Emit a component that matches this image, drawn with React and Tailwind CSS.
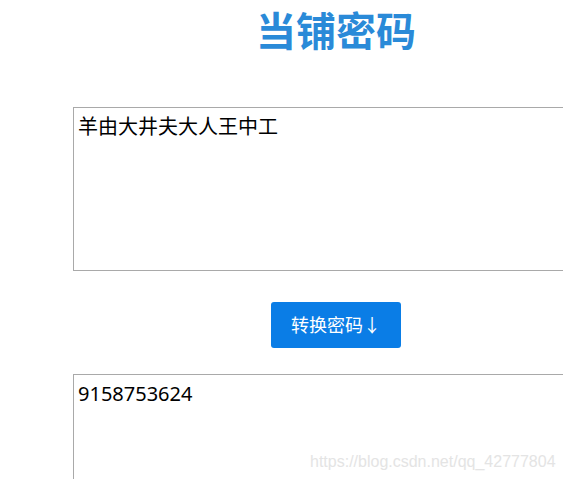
export default function App() {
  return (
    <div className="relative w-[563px] h-[479px] overflow-hidden bg-white" style={{ fontFamily: '"Noto Sans", "Noto Sans CJK SC", sans-serif' }}>
      <div className="ml-[73px] w-[526px] flex flex-col items-center">
        <h1 className="mt-[3px] h-[56px] text-[40px] leading-[56px] font-bold text-[#2a8ad8]">当铺密码</h1>
        <textarea
          className="mt-[48px] w-full h-[164px] border border-[#a9a9a9] px-[4px] py-[5px] text-[20px] leading-[28px] text-black resize-none outline-none"
          defaultValue="羊由大井夫大人王中工"
        />
        <button className="mt-[31px] w-[130px] h-[46px] rounded-[3px] bg-[#0a7de6] text-white text-[18px]">
          转换密码↓
        </button>
        <textarea
          className="mt-[26px] w-full h-[164px] border border-[#a9a9a9] px-[4px] py-[5px] text-[20px] leading-[28px] text-black resize-none outline-none"
          defaultValue="9158753624"
        />
      </div>
      <div className="absolute left-[310px] top-[450px] text-[16px] text-[#e4e4e4]" style={{ fontFamily: '"Liberation Sans", sans-serif' }}>
        https://blog.csdn.net/qq_42777804
      </div>
    </div>
  );
}
